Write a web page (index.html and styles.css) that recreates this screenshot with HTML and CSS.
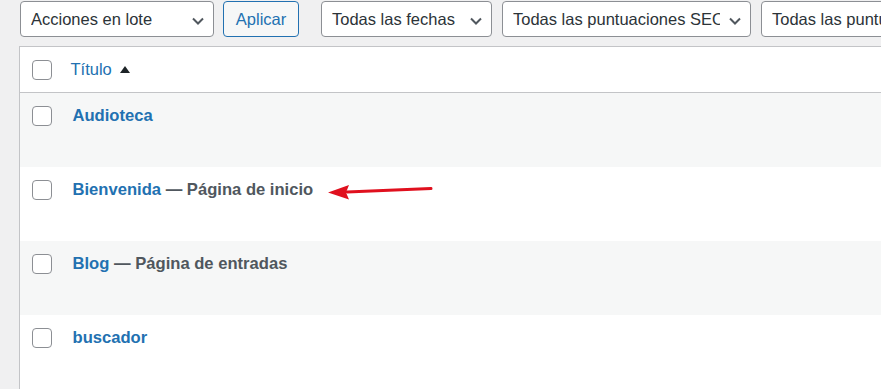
FILE: index.html
```html
<!DOCTYPE html>
<html lang="es">
<head>
  <meta charset="UTF-8" />
  <meta name="viewport" content="width=device-width, initial-scale=1.0"/>
  <title>Páginas</title>
  <link rel="stylesheet" href="styles.css">
</head>
<body>

  <div class="wrap">
    <div class="tablenav">
      <div class="select bulk-actions">
        <span>Acciones en lote</span>
        <svg class="chevron" width="12" height="8" viewBox="0 0 12 8"><path d="M1 1.5l5 5 5-5" fill="none" stroke="#50575e" stroke-width="2"/></svg>
      </div>
      <button class="button">Aplicar</button>

      <div class="select filter-dates">
        <span>Todas las fechas</span>
        <svg class="chevron" width="12" height="8" viewBox="0 0 12 8"><path d="M1 1.5l5 5 5-5" fill="none" stroke="#50575e" stroke-width="2"/></svg>
      </div>
      <div class="select filter-seo">
        <span>Todas las puntuaciones SEO</span>
        <svg class="chevron" width="12" height="8" viewBox="0 0 12 8"><path d="M1 1.5l5 5 5-5" fill="none" stroke="#50575e" stroke-width="2"/></svg>
      </div>
      <div class="select filter-read">
        <span>Todas las puntuaciones de legibilidad</span>
      </div>
    </div>

    <table class="list-table">
      <thead>
        <tr>
          <th class="check-column"><span class="checkbox"></span></th>
          <th class="title-column">
            <a href="#">Título</a>
            <svg class="sort-arrow" width="10" height="7" viewBox="0 0 10 7"><path d="M0 7 L5 0 L10 7 Z" fill="#1d2327"/></svg>
          </th>
        </tr>
      </thead>
      <tbody>
        <tr class="alt">
          <td class="check-column"><span class="checkbox"></span></td>
          <td class="title-column"><a href="#">Audioteca</a></td>
        </tr>
        <tr>
          <td class="check-column"><span class="checkbox"></span></td>
          <td class="title-column">
            <a href="#">Bienvenida</a> <span class="post-state">— Página de inicio</span>
            <svg class="marker" width="110" height="20" viewBox="0 0 110 20">
              <path d="M20 9 L104 5.5" stroke="#e0101e" stroke-width="3" stroke-linecap="round" fill="none"/>
              <path d="M1 9.5 L22 2 L19 9.5 L22 16.5 Z" fill="#e0101e"/>
            </svg>
          </td>
        </tr>
        <tr class="alt">
          <td class="check-column"><span class="checkbox"></span></td>
          <td class="title-column"><a href="#">Blog</a> <span class="post-state">— Página de entradas</span></td>
        </tr>
        <tr class="last">
          <td class="check-column"><span class="checkbox"></span></td>
          <td class="title-column"><a href="#">buscador</a></td>
        </tr>
      </tbody>
    </table>
  </div>

</body>
</html>
```

FILE: styles.css
```css
* {
  box-sizing: border-box;
}

html, body {
  margin: 0;
  padding: 0;
  height: 100%;
  overflow: hidden;
  background: #f0f0f1;
  color: #3c434a;
  font-family: "Liberation Sans", Arial, sans-serif;
}

.wrap {
  padding: 1px 0 0 19px;
  width: 1100px;
}

/* Toolbar */
.tablenav {
  display: flex;
  align-items: center;
  height: 36px;
  white-space: nowrap;
}

.select {
  position: relative;
  display: flex;
  align-items: center;
  height: 36px;
  padding: 0 30px 0 10px;
  background: #fff;
  border: 1px solid #8c8f94;
  border-radius: 4px;
  font-size: 16.5px;
  color: #2c3338;
  overflow: hidden;
  margin-right: 9px;
  margin-left: 1px;
}

.select .chevron {
  position: absolute;
  right: 9px;
  top: 15px;
}

.select span {
  overflow: hidden;
}

.bulk-actions {
  width: 194px;
}

.button {
  height: 36px;
  padding: 0;
  margin: 0 21px 0 0;
  background: #f6f7f7;
  border: 1px solid #2271b1;
  border-radius: 4px;
  color: #2271b1;
  font-family: inherit;
  font-size: 16.5px;
  width: 76px;
}

.filter-dates {
  width: 171px;
}

.filter-seo {
  width: 249px;
}

.filter-seo span {
  width: 212px;
}

.filter-read {
  width: 300px;
}

/* Table */
.list-table {
  margin-top: 9px;
  width: 1000px;
  border-collapse: collapse;
  background: #fff;
  border: 1px solid #c3c4c7;
  border-bottom: none;
}

.list-table thead th {
  height: 46px;
  text-align: left;
  font-weight: normal;
  border-bottom: 1px solid #c3c4c7;
  vertical-align: middle;
}

.list-table td {
  height: 74px;
  vertical-align: top;
}

.list-table tr.last td {
  height: 90px;
}

.list-table tr.alt td {
  background: #f6f7f7;
}

.check-column {
  width: 51px;
  padding: 0 0 0 12px;
}

td.check-column {
  padding-top: 13px;
}

.checkbox {
  display: block;
  width: 20px;
  height: 20px;
  border: 1px solid #8c8f94;
  border-radius: 4px;
  background: #fff;
}

.title-column {
  padding: 0;
  position: relative;
}

th.title-column {
  font-size: 16.5px;
}

th.title-column a {
  color: #2271b1;
  text-decoration: none;
}

.sort-arrow {
  margin-left: 4px;
  vertical-align: 2px;
}

td.title-column {
  padding-top: 13px;
  padding-left: 2px;
  font-size: 16.6px;
  font-weight: bold;
}

td.title-column a {
  color: #2271b1;
  text-decoration: none;
}

.post-state {
  color: #50575e;
}

.marker {
  position: absolute;
  left: 256px;
  top: 16px;
}
```
